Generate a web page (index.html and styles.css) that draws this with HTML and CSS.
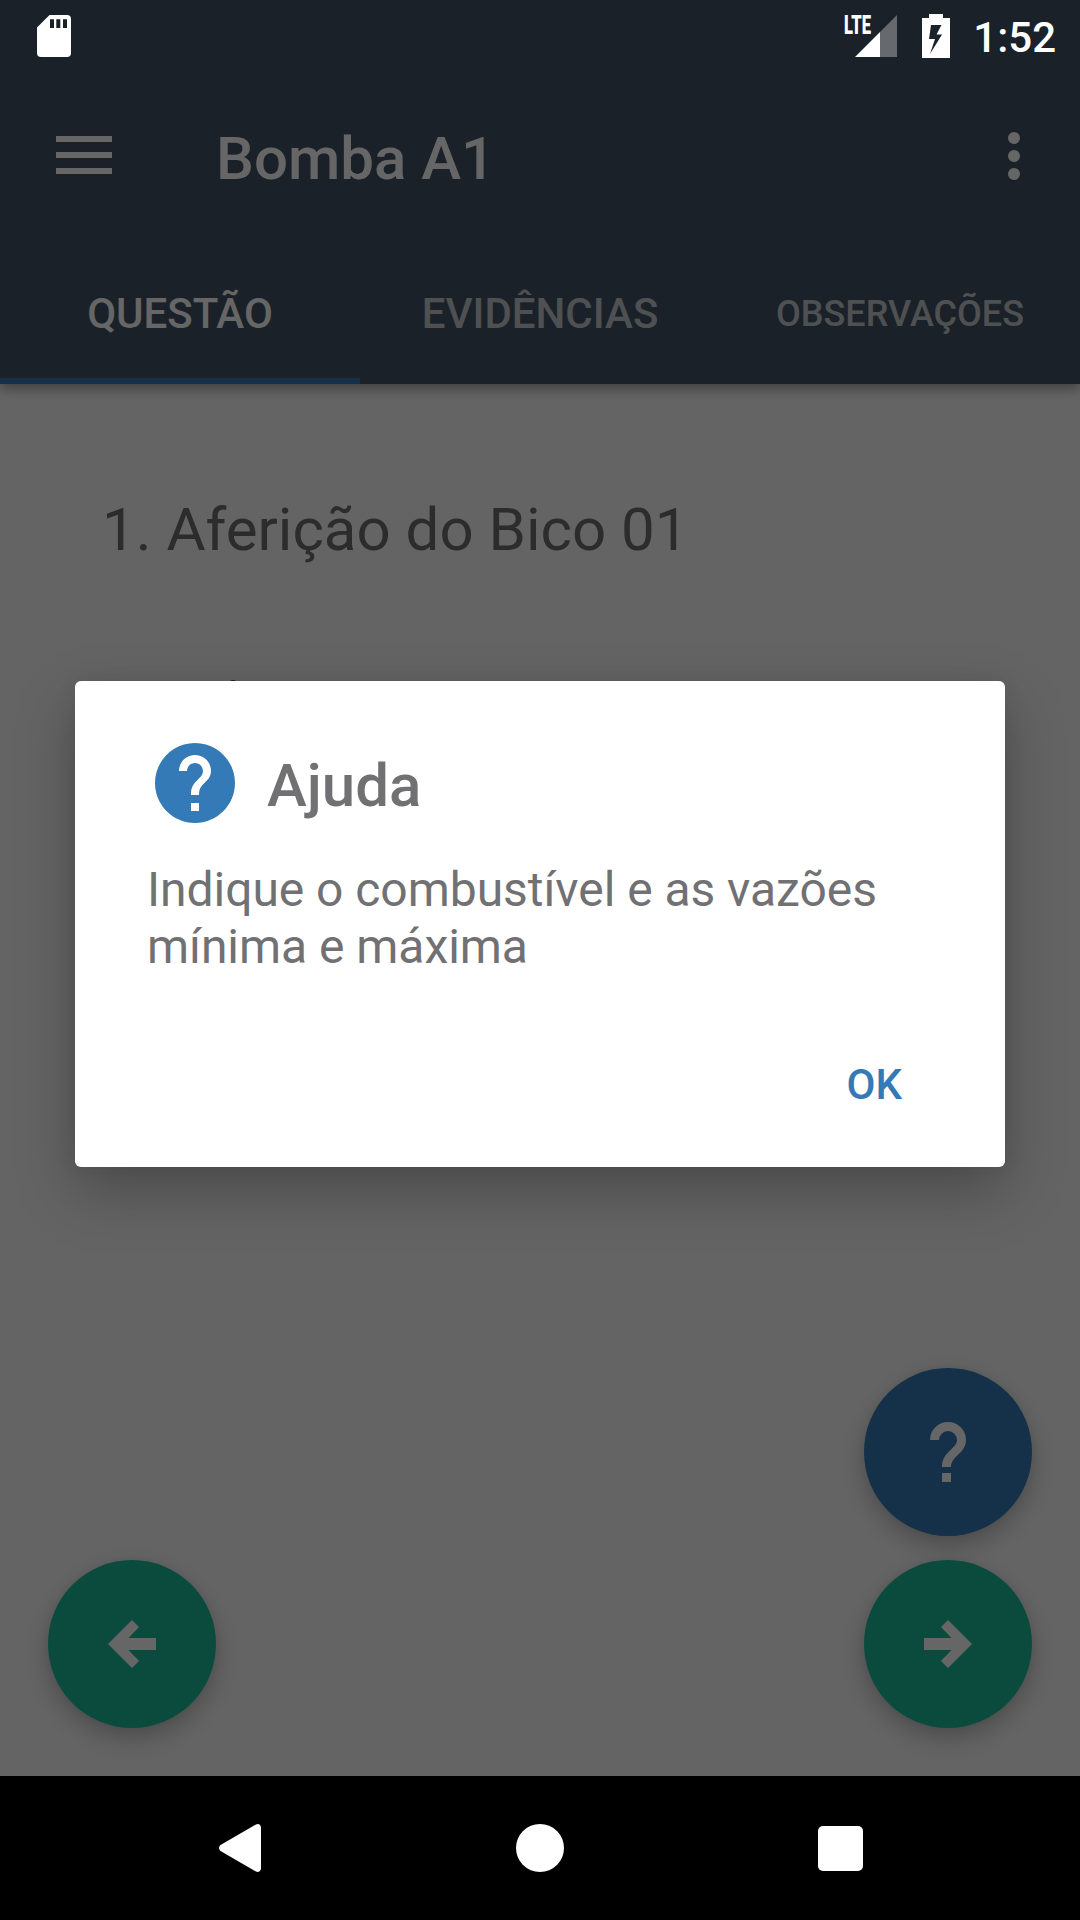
FILE: index.html
```html
<!DOCTYPE html>
<html lang="pt-BR">
<head>
  <meta charset="UTF-8" />
  <meta name="viewport" content="width=device-width, initial-scale=1.0"/>
  <title>Bomba A1</title>
  <link rel="stylesheet" href="styles.css">
</head>
<body>

  <div class="screen">

    <!-- Status bar -->
    <div class="status-bar">
      <svg class="sd-icon" width="34" height="42" viewBox="0 0 34 42">
        <path fill="#fff" fill-rule="evenodd" d="M12.500 0H30a4 4 0 0 1 4 4V38a4 4 0 0 1-4 4H4a4 4 0 0 1-4-4V12.500ZM13 4.300V13h4V4.300ZM19.300 4.300V13h4V4.300ZM26 4.300V13h4V4.300Z"/>
      </svg>
      <div class="status-right">
        <svg class="signal-icon" width="54" height="42" viewBox="0 0 54 42">
          <path fill="#66696d" d="M36 17L53 0V42H36Z"/>
          <path fill="#fff" d="M11 42L36 17V42Z"/>
          <text class="lte" x="0" y="19" textLength="27" lengthAdjust="spacingAndGlyphs">LTE</text>
        </svg>
        <svg class="battery-icon" width="28" height="44" viewBox="0 0 28 44">
          <path fill="#fff" fill-rule="evenodd" d="M7 0H21V4H28V44H0V4H7ZM9 11L7 25H13L8 40L20 20.500H14.500L19.500 11Z"/>
        </svg>
        <span class="clock">1:52</span>
      </div>
    </div>

    <header class="header">
      <div class="toolbar">
        <svg class="menu-icon" width="56" height="38" viewBox="0 0 56 38">
          <path fill="#fff" d="M0 0H56V6H0ZM0 16H56V22H0ZM0 32H56V38H0Z"/>
        </svg>
        <h1>Bomba A1</h1>
        <svg width="12" height="48" viewBox="0 0 12 48">
          <circle cx="6" cy="6" r="6" fill="#fff"/>
          <circle cx="6" cy="24" r="6" fill="#fff"/>
          <circle cx="6" cy="42" r="6" fill="#fff"/>
        </svg>
      </div>
      <nav class="tabs">
        <a class="tab active">QUESTÃO</a>
        <a class="tab">EVIDÊNCIAS</a>
        <a class="tab small">OBSERVAÇÕES</a>
      </nav>
    </header>

    <main class="content">
      <h2>1. Aferição do Bico 01</h2>
      <div class="field-mark"></div>

      <div class="fab-row">
        <button class="fab green">
          <svg width="48" height="48" viewBox="0 0 48 48">
            <path fill="#fff" d="M0 24L24 0L31 7L20.500 18H48V30H20.500L31 41L24 48Z"/>
          </svg>
        </button>
        <div class="fab-column">
          <button class="fab blue">
            <svg width="36" height="60" viewBox="8 4 8 13.333">
              <path fill="#fff" d="M12 4a4 4 0 0 0-4 4h2a2 2 0 0 1 4 0c0 2-3.330 2.500-3.330 6h2c0-2.500 3.330-3 3.330-6a4 4 0 0 0-4-4zM10.670 15.330v2h2v-2z"/>
            </svg>
          </button>
          <button class="fab green">
            <svg width="48" height="48" viewBox="0 0 48 48">
              <path fill="#fff" d="M48 24L24 0L17 7L27.500 18H0V30H27.500L17 41L24 48Z"/>
            </svg>
          </button>
        </div>
      </div>
    </main>

    <!-- Android navigation -->
    <div class="nav-bar">
      <svg width="42" height="48" viewBox="0 0 42 48">
        <path fill="#fff" d="M1.500 21L36 1Q41 -1.500 42 3V45Q41 49.500 36 47L1.500 27Q-1.500 24 1.500 21Z"/>
      </svg>
      <span class="nav-home"></span>
      <span class="nav-recent"></span>
    </div>

    <!-- Overlay -->
    <div class="overlay">
      <div class="dialog">
        <div class="dialog-title">
          <svg width="80" height="80" viewBox="2 2 20 20">
            <path fill="#337ab7" d="M12 2C6.480 2 2 6.480 2 12s4.480 10 10 10 10-4.480 10-10S17.520 2 12 2zm1 17h-2v-2h2v2zm2.070-7.750l-.9.920C13.450 12.900 13 13.500 13 15h-2v-.5c0-1.100.450-2.100 1.170-2.830l1.240-1.260c.370-.360.590-.860.590-1.410 0-1.100-.9-2-2-2s-2 .9-2 2H8c0-2.210 1.790-4 4-4s4 1.790 4 4c0 .880-.360 1.680-.930 2.250z"/>
          </svg>
          <h3>Ajuda</h3>
        </div>
        <p>Indique o combustível e as vazões mínima e máxima</p>
        <button class="dialog-ok">OK</button>
      </div>
    </div>

  </div>

</body>
</html>
```
FILE: styles.css
```css
* { margin: 0; padding: 0; box-sizing: border-box; }

body {
  font-family: Roboto, sans-serif;
  background-color: #000;
}

button {
  border: none;
  font-family: inherit;
}

.screen {
  position: relative;
  width: 1080px;
  height: 1920px;
  overflow: hidden;
  display: flex;
  flex-direction: column;
}

/* Status bar */
.status-bar {
  position: absolute;
  top: 0; left: 0;
  z-index: 20;
  width: 100%;
  height: 72px;
  padding: 0 24px 0 37px;
  display: flex;
  justify-content: space-between;
  align-items: center;
}

.status-right {
  display: flex;
  align-items: center;
}

.signal-icon {
  overflow: visible;
}

.battery-icon {
  margin: 0 23px 0 24px;
}

.lte {
  font-size: 25px;
  font-weight: 900;
  fill: #fff;
}

.clock {
  padding-top: 3px;
  font-size: 42px;
  font-weight: 500;
  line-height: 72px;
  color: #fff;
}

/* Header */
.header {
  position: relative;
  z-index: 1;
  height: 384px;
  padding-top: 72px;
  background-color: #425465;
  color: #fff;
  box-shadow: 0 4px 12px rgba(0, 0, 0, 0.4);
}

.toolbar {
  height: 168px;
  padding: 0 60px 0 56px;
  display: flex;
  align-items: center;
}

.menu-icon {
  margin-bottom: 2px;
}

.toolbar h1 {
  flex: 1;
  margin-left: 104px;
  padding-top: 5px;
  font-size: 60px;
  font-weight: 500;
  line-height: 70px;
}

.tabs {
  height: 144px;
  display: flex;
}

.tab {
  flex: 1;
  text-align: center;
  font-size: 42px;
  font-weight: 500;
  line-height: 148px;
  color: rgba(255, 255, 255, 0.7);
}

.tab.small {
  font-size: 36px;
}

.tab.active {
  height: 144px;
  color: #fff;
  border-bottom: 6px solid #337ab7;
}

/* Content */
.content {
  height: 1392px;
  padding: 111px 48px 48px;
  background-color: #fafafa;
  display: flex;
  flex-direction: column;
}

.content h2 {
  padding-left: 54px;
  font-size: 60px;
  font-weight: 400;
  line-height: 70px;
  color: #6e6e6e;
}

.field-mark {
  width: 8px;
  height: 4px;
  margin: 115px 0 0 181px;
  border-radius: 4px 4px 0 0;
  background-color: #555;
}

.fab-row {
  margin-top: auto;
  display: flex;
  justify-content: space-between;
  align-items: flex-end;
}

.fab-column {
  display: flex;
  flex-direction: column;
  gap: 24px;
}

.fab {
  width: 168px;
  height: 168px;
  border-radius: 50%;
  display: flex;
  justify-content: center;
  align-items: center;
  box-shadow: 0 10px 24px rgba(0, 0, 0, 0.24), 0 0 8px rgba(0, 0, 0, 0.06);
}

.fab.green { background-color: #1abc9c; }
.fab.blue { background-color: #337ab7; }

/* Navigation bar */
.nav-bar {
  height: 144px;
  padding: 0 217px 0 219px;
  background-color: #000;
  display: flex;
  justify-content: space-between;
  align-items: center;
}

.nav-home {
  width: 48px;
  height: 48px;
  border-radius: 50%;
  background-color: #fff;
}

.nav-recent {
  width: 45px;
  height: 45px;
  border-radius: 5px;
  background-color: #fff;
}

/* Overlay */
.overlay {
  position: absolute;
  top: 0; left: 0;
  z-index: 10;
  width: 100%;
  height: 1776px;
  padding-top: 72px;
  background-color: rgba(0, 0, 0, 0.6);
  display: flex;
  justify-content: center;
  align-items: center;
}

.dialog {
  width: 930px;
  height: 486px;
  padding: 62px 72px 0;
  border-radius: 6px;
  background-color: #fff;
  color: #717174;
  box-shadow: 0 24px 60px rgba(0, 0, 0, 0.26), 0 0 20px rgba(0, 0, 0, 0.06);
  display: flex;
  flex-direction: column;
}

.dialog-title {
  padding-left: 8px;
  display: flex;
  align-items: center;
}

.dialog-title h3 {
  margin-left: 32px;
  padding-top: 5px;
  font-size: 60px;
  font-weight: 500;
  line-height: 70px;
}

.dialog p {
  margin-top: 38px;
  font-size: 48px;
  line-height: 57px;
  letter-spacing: -0.04px;
}

.dialog-ok {
  align-self: flex-end;
  margin: 85px 31px 0 0;
  background: none;
  font-size: 42px;
  font-weight: 500;
  line-height: 50px;
  color: #337ab7;
}
```
